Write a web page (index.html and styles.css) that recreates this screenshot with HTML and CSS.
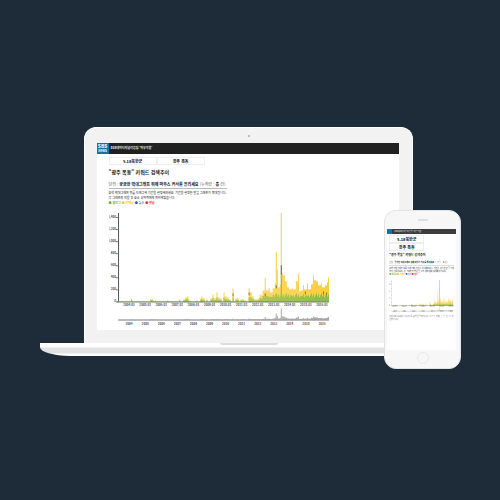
FILE: index.html
```
<!DOCTYPE html>
<html lang="ko">
<head>
<meta charset="utf-8">
<title>마부작침</title>
<link rel="stylesheet" href="styles.css">
</head>
<body>
<main class="scene">
  <div class="devices">
    <div class="laptop">
      <div class="lid">
        <span class="camera"></span>
        <div class="screen">
          <header class="bar"><span class="logo">SBS<small>NEWS</small></span><span class="brand">SBS데이터저널리즘팀 '마부작침'</span></header>
          <div class="page">
            <nav class="tabs"><a href="#a">5.18북한군</a><a href="#b">광주 폭동</a></nav>
            <h1>"광주 폭동" 키워드 검색추이</h1>
            <p class="hint">단위 : <b>궁금한 막대그래프 위에 마우스 커서를 올리세요</b> (누적량 : <b>총</b> 건)</p>
            <p class="note">회색 막대그래프 위를 드래그해 기간을 설정해보세요. 기간을 설정한 만큼 그래프가 확대됩니다.<br>각 그래프의 색을 및 요소 상하위에에 위치해있습니다.</p>
            <p class="legend"><span class="g">● 블로그</span><span class="y">● 카페글</span><span class="b">● 뉴스</span><span class="r">● 댓글</span></p>
            <svg class="chart" viewBox="0 0 222 118" role="img" aria-label="키워드 검색추이"></svg>
          </div>
        </div>
      </div>
      <div class="base"><span class="notch"></span></div>
    </div>
    <div class="phone">
      <span class="speaker"></span>
      <div class="screen">
        <header class="bar"><span class="logo"></span><span class="brand">SBS데이터저널리즘팀 '마부작침'</span></header>
        <div class="page">
          <nav class="tabs"><a href="#c">5.18북한군</a><a href="#d">광주 폭동</a></nav>
          <h2>"광주 폭동" 키워드 검색추이</h2>
          <p class="hint">단위 : <b>궁금한 막대그래프 위에 마우스 커서를 올리세요</b> (누적량 : 총 건)</p>
          <p class="note">회색 막대그래프 위를 드래그해 기간을 설정해보세요. 기간을 설정한 만큼 그래프가 확대됩니다. 각 그래프의 색을 및 요소 상하위에 위치해있습니다.</p>
          <p class="legend"><span class="g">● 블로그</span><span class="y">● 카페글</span><span class="b">● 뉴스</span><span class="r">● 댓글</span></p>
          <svg class="chart" data-compact="1" viewBox="0 0 222 118" role="img" aria-label="키워드 검색추이"></svg>
          <p class="note foot">네이버와 다음에서 키워드를 검색한 결과입니다. 블로그, 카페, 뉴스, 댓글을 합산했습니다.</p>
        </div>
      </div>
      <span class="home"></span>
    </div>
  </div>
</main>
<script src="chart.js"></script>
</body>
</html>
```
FILE: styles.css
```
* { box-sizing: border-box; margin: 0; padding: 0; }
body {
  background: #1e2b38;
  color: #111;
  font-family: "Noto Sans CJK KR", "Noto Sans", sans-serif;
  font-size: 4px;
  line-height: 5px;
}
a { color: inherit; text-decoration: none; }
.scene {
  min-height: 100vh;
  display: flex;
  align-items: center;
  justify-content: center;
  padding: 0 3px 4px 0;
}
.devices { position: relative; width: 84%; padding-bottom: 13px; }
.lid {
  position: relative;
  width: 79%;
  margin: 0 auto;
  padding: 15px 13px 13px 12px;
  background: #f2f2f2;
  border: 1px solid #fff;
  border-bottom: 0;
  border-radius: 12px 12px 0 0;
}
.camera {
  position: absolute;
  top: 7px;
  left: 50%;
  width: 2px;
  height: 2px;
  border-radius: 50%;
  background: #aaa;
}
.screen { background: #fff; overflow: hidden; }
.bar {
  display: flex;
  align-items: center;
  height: 11px;
  gap: 2px;
  background: #202020;
  color: #eee;
  font-weight: 700;
}
.brand { font-size: 3px; white-space: nowrap; }
.logo {
  display: flex;
  flex-direction: column;
  align-items: center;
  justify-content: center;
  width: 12px;
  height: 11px;
  background: #1670aa;
  color: #fff;
  font-size: 5px;
  line-height: 6px;
}
.logo small { font-size: 3px; line-height: 4px; }
.laptop .page { padding: 3px 12px 2px; }
.tabs { display: flex; width: 96px; font-weight: 700; text-align: center; }
.tabs a { flex: 1; height: 8px; line-height: 6px; border: 1px solid #eee; }
h1 { margin-top: 4px; font-size: 5px; line-height: 6px; }
.hint { margin-top: 7px; color: #555; }
.hint b { color: #111; }
.laptop .hint { width: 118px; padding-bottom: 1px; border-bottom: 1px solid #bbb; white-space: nowrap; }
.laptop .note { margin-top: 2px; font-size: 3px; line-height: 5px; white-space: nowrap; }
.legend { display: flex; gap: 1px; font-weight: 700; }
.laptop .legend { font-size: 3px; }
.g { color: #62a83f; }
.y { color: #f3c62d; }
.b { color: #3157a5; }
.r { color: #d9303a; }
.chart { display: block; font-size: 3px; font-weight: 700; fill: #444; }
.laptop .chart { width: 80%; margin-top: 4px; }
.base {
  height: 13px;
  background: linear-gradient(#fff 0 4px, #e2e2e2 5px 10px, #fff 11px);
  border-radius: 0 0 30px 30px / 0 0 9px 9px;
}
.notch {
  display: block;
  width: 58px;
  height: 2px;
  margin: 0 auto;
  background: #ddd;
  border-radius: 0 0 6px 6px;
}
.phone {
  position: absolute;
  right: -4px;
  bottom: 0;
  width: 77px;
  padding: 18px 4px 18px 2px;
  background: #f7f7f7;
  border: 1px solid #e2e2e2;
  border-radius: 12px;
  font-size: 2px;
  line-height: 3px;
}
.phone .screen { min-height: 121px; }
.phone .bar { height: 5px; font-weight: 400; background: #3c3c3c; }
.phone .brand { font-size: 2px; }
.phone .logo { width: 5px; height: 5px; }
.phone .page { padding: 1px 2px; }
.phone .tabs { flex-direction: column; width: 35px; font-size: 4px; }
.phone .tabs a { flex: none; }
.phone h2 { margin-top: 2px; font-size: 3px; line-height: 5px; white-space: nowrap; }
.phone .hint { margin-top: 3px; padding-bottom: 1px; border-bottom: 1px solid #ddd; white-space: nowrap; }
.phone .note { margin-top: 1px; }
.phone .legend { gap: 0; }
.phone .chart { width: 100%; margin-top: 3px; font-size: 5px; font-weight: 400; }
.foot { color: #777; }
.speaker, .home { position: absolute; left: 50%; }
.speaker { top: 8px; width: 10px; height: 2px; margin-left: -5px; border-radius: 1px; background: #ddd; }
.home { bottom: 4px; width: 12px; height: 12px; margin-left: -6px; border: 1px solid #e9e9e9; border-radius: 50%; }
```
FILE: chart.js
```
// [month offset, total height] pairs, offsets measured from the axis
const bars = [[13,3],[32,2],[34,2],[37,1],[49,1],[61,2],[65,2],[67,4],[69,5],[71,1],[78,1],[82,3],[83,5],[85,3],[88,2],[92,3],[94,7],[96,3],[98,9],[100,4],[102,3],[105,9],[107,5],[109,4],[111,2],[114,13],[117,3],[119,3],[122,2],[124,2],[126,1],[130,13],[132,9],[134,5],[136,2],[138,2],[140,3],[141,7],[143,6],[144,11],[146,23],[148,11],[150,13],[152,9],[154,13],[156,18],[157,49],[158,32],[160,14],[161,17],[162,88],[163,28],[165,26],[167,20],[169,14],[171,12],[173,13],[175,12],[177,20],[179,27],[180,10],[182,11],[184,16],[186,12],[188,18],[190,12],[192,17],[194,26],[196,21],[198,20],[200,16],[202,18],[204,14],[206,16],[208,19],[209,24]];
// fill between neighbouring months
const heightAt = x => {
  const i = bars.findIndex(b => b[0] >= x);
  if (i < 1) return i === 0 && bars[0][0] === x ? bars[0][1] : 0;
  if (bars[i][0] === x) return bars[i][1];
  return bars[i][0] - bars[i - 1][0] > 2 ? 0 : Math.min(bars[i][1], bars[i - 1][1]);
};
const rect = (x, y, w, h, c) => `<rect x="${x}" y="${y}" width="${w}" height="${h}" fill="${c}"/>`;
document.querySelectorAll('.chart').forEach(svg => {
  const compact = svg.dataset.compact;
  const left = 9, floor = 91;
  const peakWidth = compact ? 3 : 1;
  let out = '';
  for (let x = 0; x < 210; x++) {
    const h = heightAt(x);
    if (!h) continue;
    const g = Math.min(h * 0.5, x > 140 ? 4 + (x * 7 % 5) : 4);
    out += rect(left + x, floor - h, h > 80 ? peakWidth : 1, h, '#fbcf3c') + rect(left + x, floor - g, 1, g, '#86bd55');
    const m = Math.max(0.3, h > 40 ? h / 8 : (h - 6) / 7);
    out += rect(left + x, 109 - m, 1, m, '#aaa');
  }
  if (!compact) {
    out += rect(171, 63, 1, 21, '#79b668') + rect(171, 55, 1, 9, '#3c63b8');
    [[155, 83], [166, 75], [195, 81], [213, 81], [216, 82], [123, 83], [139, 82]].forEach(p => { out += rect(p[0], p[1], 1, 3, '#7e7a50'); });
  }
  out += rect(9, 3, 1, 88, compact ? '#bbb' : '#555') + rect(8, 91, 211, 1, '#4d7140') + rect(9, 109, 210, 1, '#777');
  for (let i = 0; i < 8; i++) {
    const y = 91 - i * 12;
    const value = i * 200;
    out += rect(7, y, 2, 1, '#777');
    if (compact) {
      if (i % 2 === 0) out += `<text x="0" y="${y + 1}">${value / 100}</text>`;
    } else {
      out += `<text x="7" y="${y + 1}" text-anchor="end">${value.toLocaleString()}</text>`;
    }
  }
  for (let i = 0; i < 13; i++) {
    const x = 20 + i * 16;
    if (!compact || i % 2 === 0) {
      out += `<text x="${x}" y="96" text-anchor="middle">${2004 + i}.01</text>`;
      out += `<text x="${x}" y="114" text-anchor="middle">${2004 + i}</text>`;
    }
  }
  svg.innerHTML = out;
});
```
